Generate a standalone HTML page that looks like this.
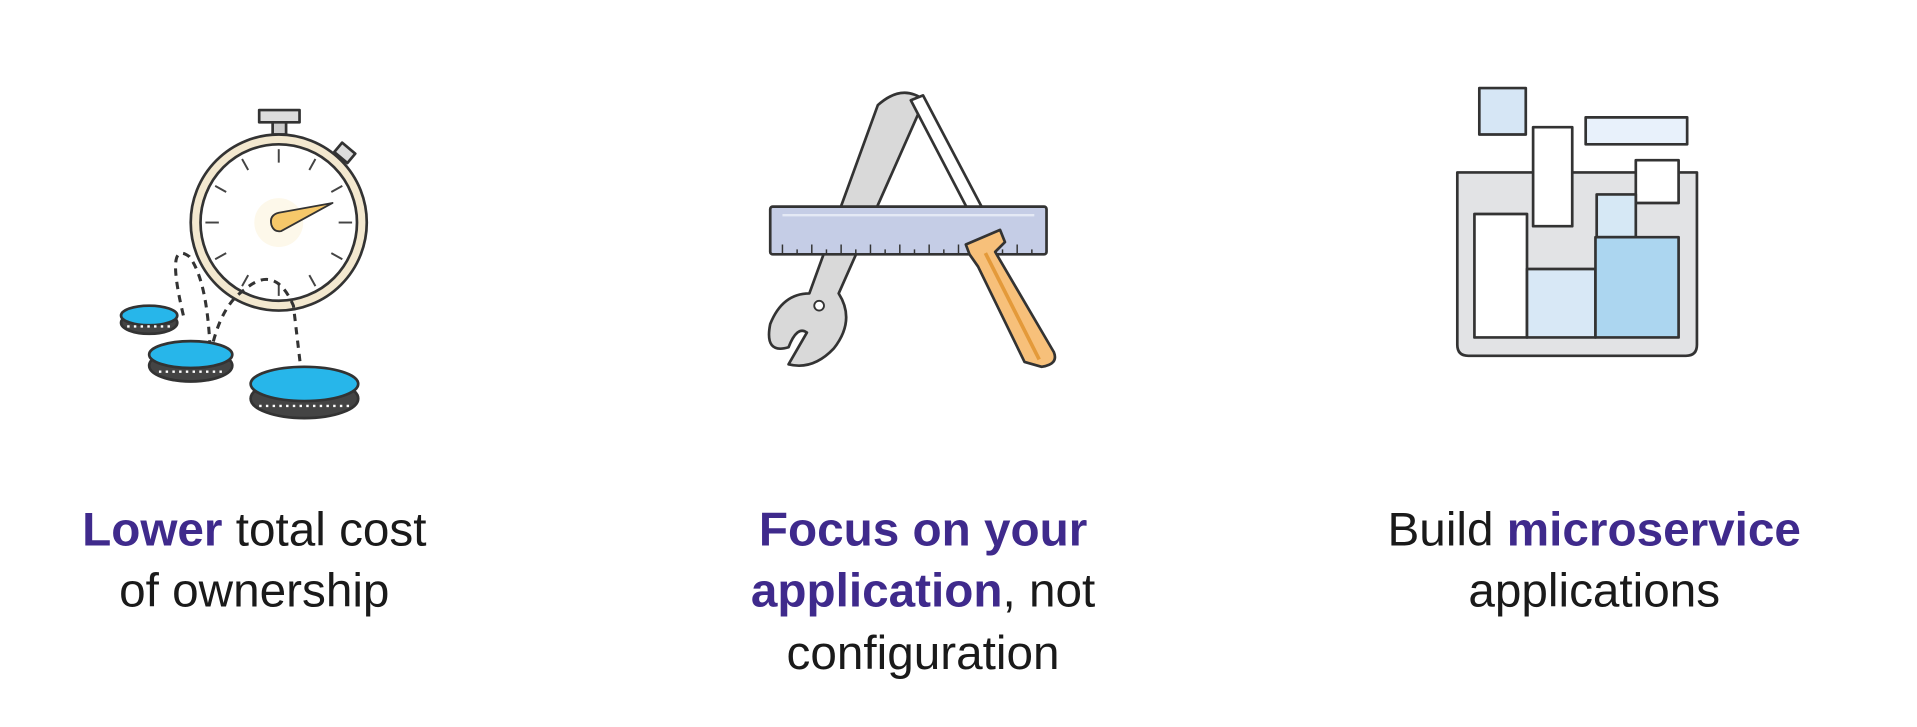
<!DOCTYPE html>
<html><head><meta charset="utf-8"><style>
html,body{margin:0;padding:0;background:#fff;width:1917px;height:727px;overflow:hidden}
svg{display:block}
</style></head><body>
<svg width="1917" height="727" viewBox="0 0 1568 594.6" xmlns="http://www.w3.org/2000/svg">
<g stroke="#333" stroke-width="2.2" stroke-linejoin="round">
<!-- stopwatch -->
<rect x="212" y="90" width="33" height="10" fill="#ddd"/>
<rect x="223" y="100" width="11" height="10" fill="#ccc"/>
<rect x="275" y="120" width="14" height="10" fill="#ddd" transform="rotate(40 282 125)"/>
<circle cx="228" cy="182" r="72" fill="#f3e8cf"/>
<circle cx="228" cy="182" r="64" fill="#fff"/>
<circle cx="228" cy="182" r="20" fill="#fdf8ea" stroke="none"/>
<g stroke="#444" stroke-width="1.6">
<line x1="228" y1="122" x2="228" y2="133"/><line x1="228" y1="231" x2="228" y2="242"/>
<line x1="168" y1="182" x2="179" y2="182"/><line x1="277" y1="182" x2="288" y2="182"/>
<line x1="258" y1="130" x2="253" y2="139"/><line x1="280" y1="152" x2="271" y2="157"/>
<line x1="280" y1="212" x2="271" y2="207"/><line x1="258" y1="234" x2="253" y2="225"/>
<line x1="198" y1="130" x2="203" y2="139"/><line x1="176" y1="152" x2="185" y2="157"/>
<line x1="176" y1="212" x2="185" y2="207"/><line x1="198" y1="234" x2="203" y2="225"/>
</g>
<path d="M222 184 Q220 176 228 174 L272 166 L230 189 Q224 190 222 184Z" fill="#f6c86a" stroke-width="1.5"/>
<!-- dashes -->
<g fill="none" stroke-dasharray="6 5" stroke-width="2.5">
<path d="M150 258 Q135 195 155 210 Q170 230 172 290"/>
<path d="M172 290 Q180 250 200 237 Q225 215 240 250 L248 318"/>
</g>
<!-- coins -->
<g>
<ellipse cx="122" cy="264" rx="23" ry="9" fill="#444"/>
<ellipse cx="122" cy="258" rx="23" ry="8" fill="#27b6ea"/>
<ellipse cx="156" cy="299" rx="34" ry="13" fill="#444"/>
<ellipse cx="156" cy="290" rx="34" ry="11" fill="#27b6ea"/>
<ellipse cx="249" cy="326" rx="44" ry="16" fill="#444"/>
<ellipse cx="249" cy="314" rx="44" ry="14" fill="#27b6ea"/>
</g>
<g stroke="#fff" stroke-width="2" stroke-dasharray="2 3.5">
<line x1="104" y1="267" x2="140" y2="267"/>
<line x1="130" y1="304" x2="184" y2="304"/>
<line x1="212" y1="332" x2="288" y2="332"/>
</g>
<!-- wrench -->
<path d="M718 86 Q738 68 756 82 L686 240 Q700 262 682 285 Q665 303 645 298 L660 272 Q652 266 645 284 Q625 290 630 265 Q640 240 662 240Z" fill="#d9d9d9"/>
<circle cx="670" cy="250" r="4" fill="#fff" stroke-width="1.5"/>
<!-- screwdriver shaft -->
<path d="M745 82 L755 78 L815 192 L805 197Z" fill="#fff"/>
<!-- ruler -->
<rect x="630" y="169" width="226" height="39" rx="2" fill="#c5cde6"/>
<line x1="640" y1="176" x2="846" y2="176" stroke="#e4e9f5" stroke-width="2"/>
<g stroke-width="1.2">
<path d="M640 208v-8M652 208v-4M664 208v-8M676 208v-4M688 208v-8M700 208v-4M712 208v-8M724 208v-4M736 208v-8M748 208v-4M760 208v-8M772 208v-4M784 208v-8M796 208v-4M808 208v-8M820 208v-4M832 208v-8M844 208v-4"/>
</g>
<!-- screwdriver handle -->
<path d="M790 200 L818 188 L822 198 L814 206 L862 288 Q866 298 852 300 L838 296 L800 218 L793 208Z" fill="#f7c07a"/>
<path d="M806 207 L850 294" stroke="#e49a3a" stroke-width="3" fill="none"/>
<!-- microservices -->
<path d="M1192 141 H1388 V282 Q1388 291 1379 291 H1201 Q1192 291 1192 282Z" fill="#e2e3e5"/>
<rect x="1210" y="72" width="38" height="38" fill="#d6e6f5"/>
<rect x="1297" y="96" width="83" height="22" fill="#e8f1fb"/>
<rect x="1254" y="104" width="32" height="81" fill="#fff"/>
<rect x="1338" y="131" width="35" height="35" fill="#fff"/>
<rect x="1306" y="159" width="32" height="35" fill="#d6e8f5"/>
<rect x="1206" y="175" width="43" height="101" fill="#fff"/>
<rect x="1249" y="220" width="56" height="56" fill="#d8e8f6"/>
<rect x="1305" y="194" width="68" height="82" fill="#acd6f0"/>
</g>
<g font-family="Liberation Sans, sans-serif" font-size="39" text-anchor="middle" fill="#1a1a1a">
<text x="208" y="446"><tspan fill="#3f2a8c" font-weight="600">Lower</tspan> total cost</text>
<text x="208" y="496">of ownership</text>
<text x="755" y="446" fill="#3f2a8c" font-weight="600">Focus on your</text>
<text x="755" y="496"><tspan fill="#3f2a8c" font-weight="600">application</tspan>, not</text>
<text x="755" y="547">configuration</text>
<text x="1304" y="446">Build <tspan fill="#3f2a8c" font-weight="600">microservice</tspan></text>
<text x="1304" y="496">applications</text>
</g>
</svg>
</body></html>
